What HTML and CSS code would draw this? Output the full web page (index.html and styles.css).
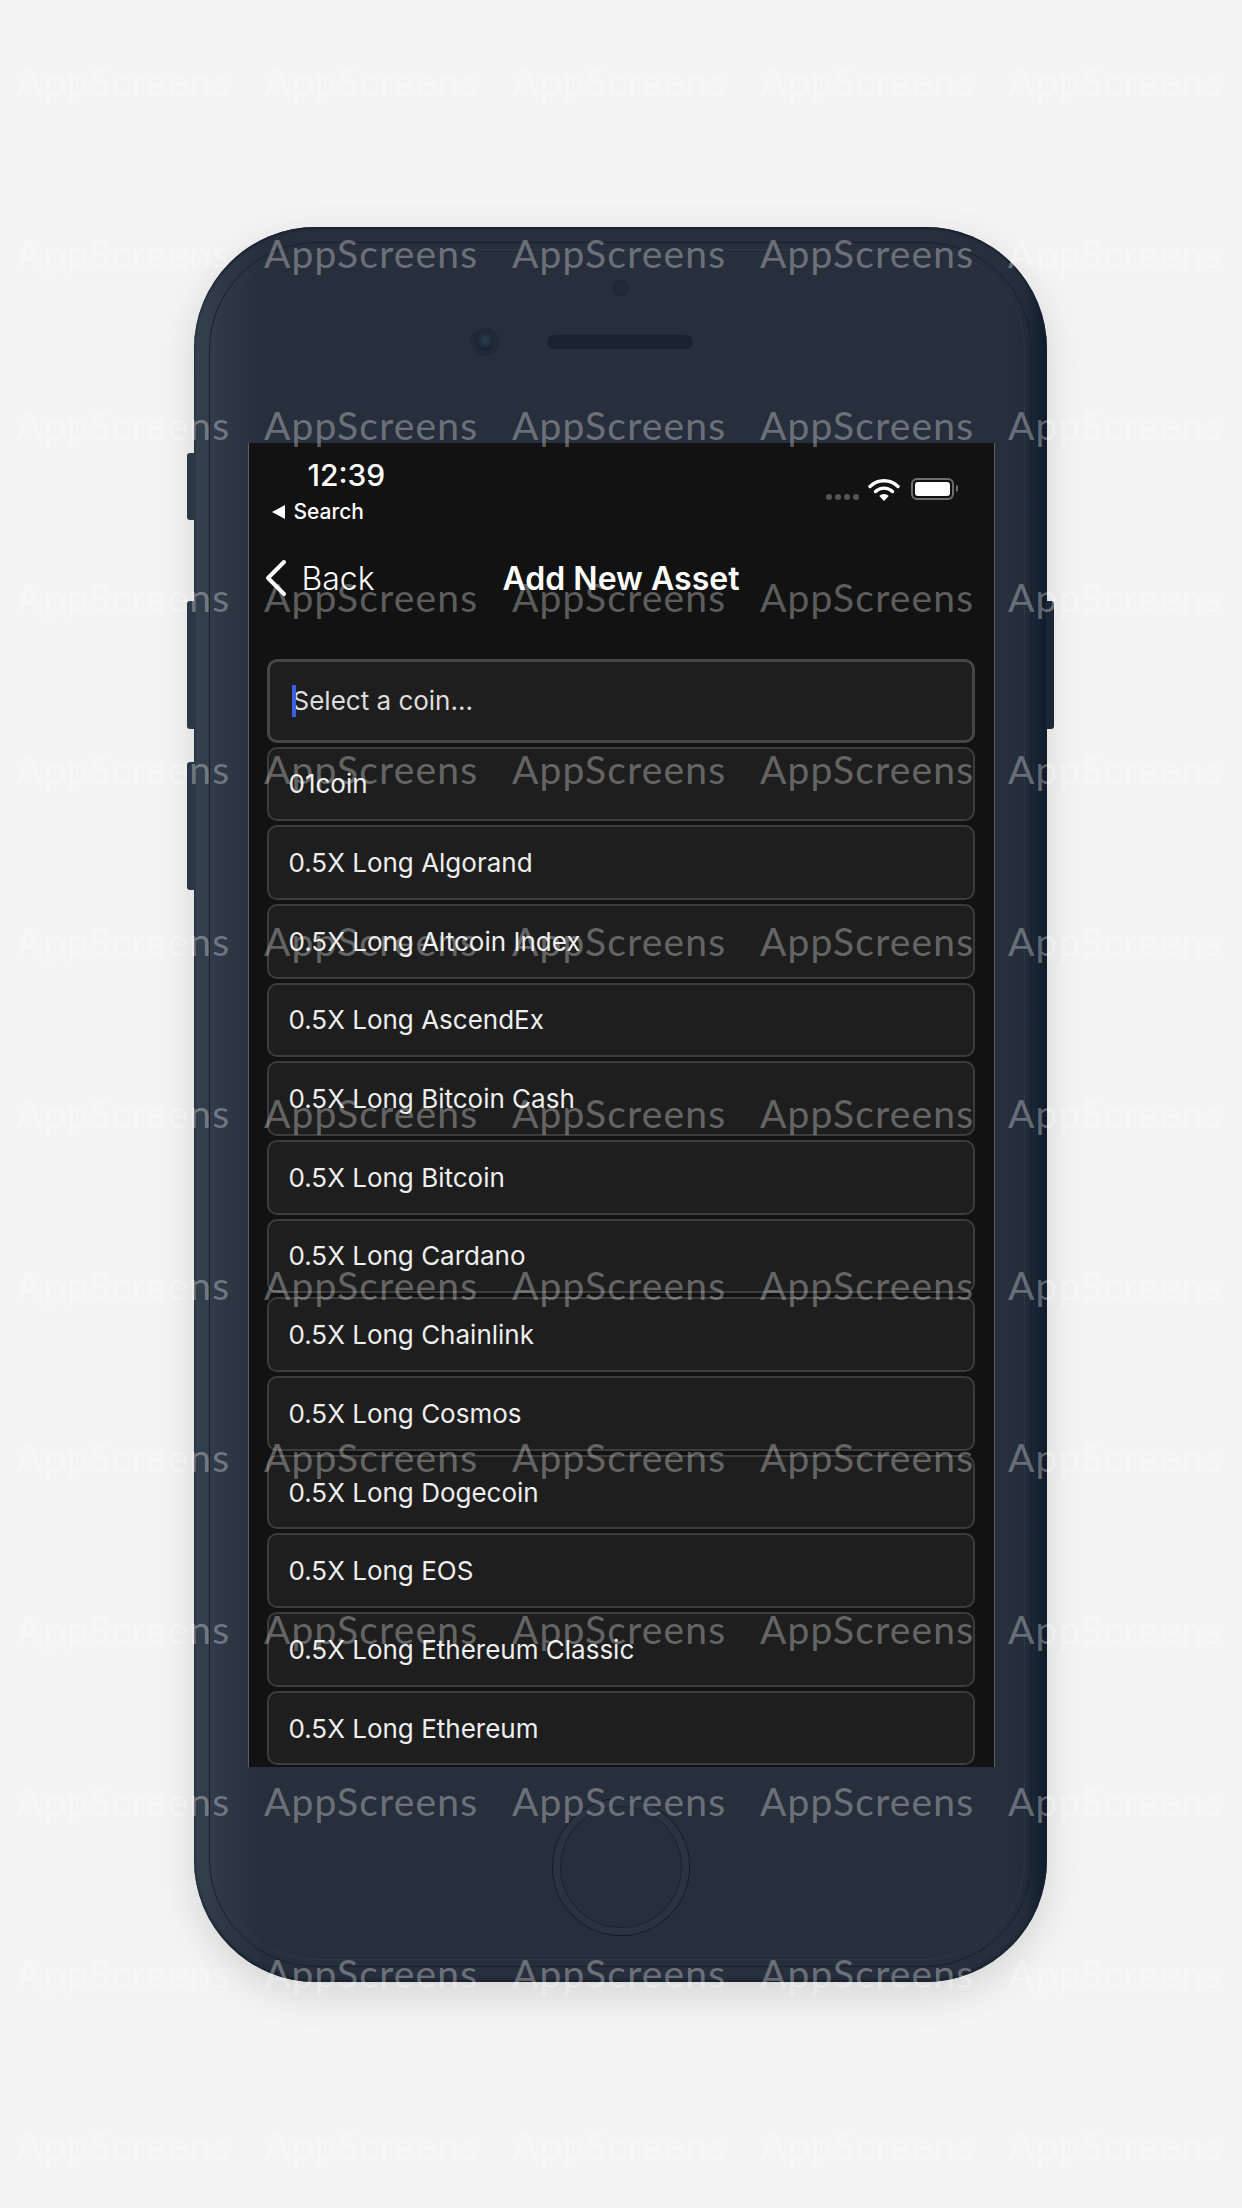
FILE: index.html
```html
<!DOCTYPE html>
<html lang="en">
<head>
    <meta charset="UTF-8">
    <meta name="viewport" content="width=device-width, initial-scale=1.0">
    <title>Add New Asset</title>
    <link rel="stylesheet" href="styles.css">
</head>
<body>

    <div class="phone">
        <span class="side-btn mute"></span>
        <span class="side-btn vol-up"></span>
        <span class="side-btn vol-down"></span>
        <span class="side-btn power"></span>

        <div class="phone-top">
            <span class="sensor"></span>
            <div class="earpiece-row">
                <span class="camera"></span>
                <span class="speaker"></span>
            </div>
        </div>

        <div class="screen">
            <div class="status-bar">
                <div class="status-left">
                    <div class="time">12:39</div>
                    <div class="back-to-app"><span class="back-arrow"></span>Search</div>
                </div>
                <div class="status-right">
                    <span class="signal"><i></i><i></i><i></i><i></i></span>
                    <svg class="wifi" width="32" height="24" viewBox="0 0 32 24">
                        <path d="M2 8.5a20 20 0 0 1 28 0" fill="none" stroke="#fff" stroke-width="3.4" stroke-linecap="round"/>
                        <path d="M7.5 13.5a12.4 12.4 0 0 1 17 0" fill="none" stroke="#fff" stroke-width="3.4" stroke-linecap="round"/>
                        <path d="M11.2 18l4.8 5 4.8-5a7 7 0 0 0-9.600 0z" fill="#fff"/>
                    </svg>
                    <span class="battery"><span class="battery-level"></span></span>
                    <span class="battery-tip"></span>
                </div>
            </div>

            <div class="nav">
                <div class="back-link">
                    <svg width="24" height="38" viewBox="0 0 24 38">
                        <path d="M20 3L4 19l16 16" fill="none" stroke="#fff" stroke-width="4" stroke-linecap="round" stroke-linejoin="round"/>
                    </svg>
                    <span>Back</span>
                </div>
                <h1>Add New Asset</h1>
            </div>

            <div class="coin-list">
                <div class="search-box"><span class="caret"></span>Select a coin...</div>
                <div class="coin">01coin</div>
                <div class="coin">0.5X Long Algorand</div>
                <div class="coin">0.5X Long Altcoin Index</div>
                <div class="coin">0.5X Long AscendEx</div>
                <div class="coin">0.5X Long Bitcoin Cash</div>
                <div class="coin">0.5X Long Bitcoin</div>
                <div class="coin">0.5X Long Cardano</div>
                <div class="coin">0.5X Long Chainlink</div>
                <div class="coin">0.5X Long Cosmos</div>
                <div class="coin">0.5X Long Dogecoin</div>
                <div class="coin">0.5X Long EOS</div>
                <div class="coin">0.5X Long Ethereum Classic</div>
                <div class="coin">0.5X Long Ethereum</div>
            </div>
        </div>

        <div class="phone-bottom">
            <span class="home-btn"></span>
        </div>
    </div>

    <div class="watermark">
        <span>AppScreens</span><span>AppScreens</span><span>AppScreens</span><span>AppScreens</span><span>AppScreens</span>
        <span>AppScreens</span><span>AppScreens</span><span>AppScreens</span><span>AppScreens</span><span>AppScreens</span>
        <span>AppScreens</span><span>AppScreens</span><span>AppScreens</span><span>AppScreens</span><span>AppScreens</span>
        <span>AppScreens</span><span>AppScreens</span><span>AppScreens</span><span>AppScreens</span><span>AppScreens</span>
        <span>AppScreens</span><span>AppScreens</span><span>AppScreens</span><span>AppScreens</span><span>AppScreens</span>
        <span>AppScreens</span><span>AppScreens</span><span>AppScreens</span><span>AppScreens</span><span>AppScreens</span>
        <span>AppScreens</span><span>AppScreens</span><span>AppScreens</span><span>AppScreens</span><span>AppScreens</span>
        <span>AppScreens</span><span>AppScreens</span><span>AppScreens</span><span>AppScreens</span><span>AppScreens</span>
        <span>AppScreens</span><span>AppScreens</span><span>AppScreens</span><span>AppScreens</span><span>AppScreens</span>
        <span>AppScreens</span><span>AppScreens</span><span>AppScreens</span><span>AppScreens</span><span>AppScreens</span>
        <span>AppScreens</span><span>AppScreens</span><span>AppScreens</span><span>AppScreens</span><span>AppScreens</span>
        <span>AppScreens</span><span>AppScreens</span><span>AppScreens</span><span>AppScreens</span><span>AppScreens</span>
        <span>AppScreens</span><span>AppScreens</span><span>AppScreens</span><span>AppScreens</span><span>AppScreens</span>
    </div>

</body>
</html>
```

FILE: styles.css
```css
body {
    margin: 0;
    height: 2208px;
    overflow: hidden;
    position: relative;
    background-color: #f4f4f5;
    font-family: Inter, "Noto Sans", sans-serif;
    display: flex;
    justify-content: center;
    align-items: center;
}

/* device frame */
.phone {
    position: relative;
    width: 853px;
    height: 1755px;
    margin-right: 2px;
    box-sizing: border-box;
    padding-left: 54px;
    display: flex;
    flex-direction: column;
    border-radius: 122px;
    background: linear-gradient(90deg, #36414f 0, #2f3947 3%, #282f3c 8%, #282f3c 95%, #222c3a 97.500%, #0f1c2d 100%);
    box-shadow: 0 12px 40px rgba(0, 0, 0, 0.13), inset 0 2px 2px #18222f, inset 0 -3px 3px #1a2431;
}
.phone::before {
    content: "";
    position: absolute;
    inset: 15px;
    border: 1px solid #18202c;
    border-radius: 108px;
    pointer-events: none;
}
.phone::after {
    content: "";
    position: absolute;
    inset: 22px;
    border: 1px solid #2f3744;
    border-radius: 100px;
    pointer-events: none;
}
.side-btn {
    position: absolute;
    width: 8px;
    background-color: #2c3745;
}
.mute {
    left: -7px;
    top: 226px;
    height: 67px;
    border-radius: 3px 0 0 3px;
}
.vol-up {
    left: -7px;
    top: 374px;
    height: 128px;
    border-radius: 3px 0 0 3px;
}
.vol-down {
    left: -7px;
    top: 535px;
    height: 128px;
    border-radius: 3px 0 0 3px;
}
.power {
    right: -7px;
    top: 374px;
    height: 128px;
    border-radius: 0 3px 3px 0;
    background-color: #1c2735;
}

.phone-top {
    height: 216px;
    width: 747px;
    flex-shrink: 0;
    display: flex;
    flex-direction: column;
    align-items: center;
    box-sizing: border-box;
    padding-top: 53px;
}
.sensor {
    width: 16px;
    height: 16px;
    border-radius: 50%;
    background-color: #232a36;
    border: 1px solid #1b2230;
    box-sizing: border-box;
}
.earpiece-row {
    margin-top: 37px;
    width: 100%;
    display: flex;
    align-items: center;
}
.camera {
    width: 18px;
    height: 18px;
    margin-left: 228px;
    border-radius: 50%;
    background: radial-gradient(circle at 50% 40%, #2c3d50, #0e1622);
    box-shadow: 0 0 0 5px #222936;
}
.speaker {
    width: 146px;
    height: 14px;
    margin-left: 53px;
    border-radius: 7px;
    background-color: #1a2230;
}

/* screen */
.screen {
    width: 747px;
    height: 1324px;
    flex-shrink: 0;
    overflow: hidden;
    box-sizing: border-box;
    background-color: #121212;
    border-left: 1px solid #5a5f68;
    border-right: 1px solid #5a5f68;
    color: #ffffff;
}
.status-bar {
    height: 92px;
    display: flex;
    justify-content: space-between;
    box-sizing: border-box;
    padding: 14px 36px 0 23px;
}
.time {
    margin-left: 36px;
    font-size: 30px;
    line-height: 36px;
    font-weight: 500;
}
.back-to-app {
    display: flex;
    align-items: center;
    margin-top: 6px;
    font-size: 21px;
    line-height: 26px;
    font-weight: 500;
}
.back-arrow {
    width: 0;
    height: 0;
    margin-right: 9px;
    border-top: 7px solid transparent;
    border-bottom: 7px solid transparent;
    border-right: 13px solid #ffffff;
}
.status-right {
    display: flex;
    align-items: flex-start;
    padding-top: 21px;
}
.signal {
    display: flex;
    gap: 3px;
    margin-top: 16px;
    margin-right: 9px;
}
.signal i {
    width: 6px;
    height: 6px;
    border-radius: 50%;
    background-color: #555555;
}
.battery {
    width: 43px;
    height: 22px;
    margin-left: 11px;
    padding: 2px;
    box-sizing: border-box;
    border: 2px solid #6e6e6e;
    border-radius: 6px;
}
.battery-level {
    display: block;
    height: 100%;
    border-radius: 3px;
    background-color: #ffffff;
}
.battery-tip {
    width: 2px;
    height: 7px;
    margin-top: 7px;
    margin-left: 2px;
    border-radius: 0 2px 2px 0;
    background-color: #6e6e6e;
}

.nav {
    position: relative;
    height: 90px;
    box-sizing: border-box;
    padding-bottom: 3px;
    display: flex;
    align-items: center;
    justify-content: center;
}
.nav h1 {
    margin: 0;
    font-size: 32px;
    font-weight: 600;
}
.back-link {
    position: absolute;
    left: 15px;
    top: 24px;
    display: flex;
    align-items: center;
    gap: 14px;
    font-size: 32px;
    font-weight: 300;
}

.coin-list {
    padding: 34px 19px 0 18px;
}
.search-box {
    position: relative;
    height: 84px;
    box-sizing: border-box;
    display: flex;
    align-items: center;
    padding-left: 23px;
    background-color: #1e1e1e;
    border: 3px solid #464646;
    border-radius: 10px;
    font-size: 26px;
    color: #dddddd;
}
.caret {
    position: absolute;
    left: 22px;
    top: 23px;
    width: 4px;
    height: 32px;
    background-color: #3d5ee0;
}
.coin {
    height: 74.7px;
    box-sizing: border-box;
    margin-top: 4px;
    display: flex;
    align-items: center;
    padding-left: 20px;
    background-color: #1e1e1e;
    border: 2px solid #3c3c3c;
    border-radius: 10px;
    font-size: 26px;
    color: #eeeeee;
}

.phone-bottom {
    flex: 1;
    width: 747px;
    display: flex;
    justify-content: center;
    padding-top: 32px;
}
.home-btn {
    width: 136px;
    height: 136px;
    box-sizing: border-box;
    border-radius: 50%;
    border: 7px solid #2b3240;
    box-shadow: 0 0 0 1px #131a26, inset 0 0 0 1px #1b2230;
}

/* AppScreens grid, sits over everything */
.watermark {
    position: absolute;
    left: 0;
    top: 0;
    width: 1242px;
    height: 2208px;
    box-sizing: border-box;
    padding: 56px 0 0 16px;
    display: grid;
    grid-template-columns: repeat(5, 248px);
    grid-auto-rows: 172px;
    pointer-events: none;
    overflow: hidden;
    font-family: Lato, "Open Sans", sans-serif;
    font-size: 39px;
    line-height: 50px;
    letter-spacing: 1.2px;
    color: rgba(255, 255, 255, 0.32);
    white-space: nowrap;
}
```
